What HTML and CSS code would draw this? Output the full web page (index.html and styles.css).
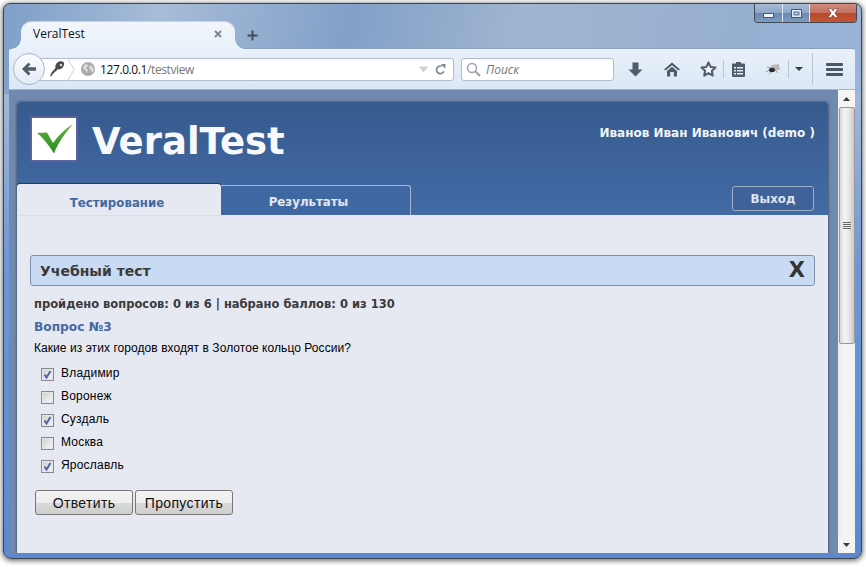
FILE: index.html
```html
<!DOCTYPE html>
<html lang="ru">
<head>
<meta charset="utf-8">
<title>VeralTest</title>
<link rel="stylesheet" href="styles.css">
</head>
<body>
<div class="window">
  <div class="caption">
    <div class="cap-btn cap-min"><span class="min-glyph"></span></div>
    <div class="cap-btn cap-max"><span class="max-glyph"></span></div>
    <div class="cap-btn cap-close">
      <svg width="16" height="10" viewBox="0 0 16 10"><path d="M3 0.500h3l2 2.400 2-2.400h3L9.800 5 13 9.500h-3L8 7 6 9.500H3L6.200 5z" fill="#fff" stroke="#5a2a20" stroke-width=".5"/></svg>
    </div>
  </div>
  <div class="tabstrip">
    <div class="ff-tab">
      <span class="ff-tab-title">VeralTest</span>
      <svg class="ff-tab-close" width="8" height="8" viewBox="0 0 8 8"><path d="M1 1l6 6M7 1L1 7" stroke="#7f8a96" stroke-width="2"/></svg>
    </div>
    <svg class="newtab" width="11" height="11" viewBox="0 0 11 11"><path d="M5.500 0.500v10M0.500 5.500h10" stroke="#3f4d5e" stroke-width="2"/></svg>
  </div>
  <div class="toolbar">
    <div class="backbtn">
      <svg width="16" height="14" viewBox="0 0 16 14"><path d="M7.500 0.500L1 7l6.500 6.500 2-2L6.800 8.800H15V5.200H6.800L9.500 2.500z" fill="#4f5c6c"/></svg>
    </div>
    <div class="urlbar">
      <div class="identity">
        <svg width="17" height="18" viewBox="0 0 17 18"><path d="M1 16.500l1.500-4 4-4.500c-.5-2 .2-4 1.800-5.500 2-1.500 5-1.800 6.200-.5 1.200 1.400.7 4-1 5.800-1.500 1.500-3.500 2-5.200 1.500L7 11.500l-1.500.3-.3 1.500-1.500.4-.5 1.800z" fill="#4a4a4a"/><circle cx="12" cy="5" r="1.300" fill="#cfd5dc"/></svg>
        <svg class="chevron" width="8" height="23" viewBox="0 0 8 23"><path d="M0.500 0L7 11.500 0.500 23" fill="none" stroke="#c9d1da"/></svg>
      </div>
      <svg class="globe" width="14" height="14" viewBox="0 0 14 14"><circle cx="7" cy="7" r="7" fill="#a9abad"/><path d="M3 3l3-1 1 2-2 2 2 2-1 3-2-3-2-1zM9 3l3 2 1 3-2 3-1-3-2-2z" fill="#d9dbdd"/></svg>
      <span class="url"><span class="url-host">127.0.0.1</span><span class="url-path">/testview</span></span>
      <svg class="url-drop" width="11" height="7" viewBox="0 0 11 7"><path d="M0.500 0.500h10L5.500 6.500z" fill="#cdd3da"/></svg>
      <svg class="reload" width="11" height="13" viewBox="0 0 13 13"><path d="M10.500 8.500A4.500 4.500 0 1 1 8 2.700" fill="none" stroke="#7d8793" stroke-width="2"/><path d="M7 0l5.500 0-.5 5.500z" fill="#7d8793"/></svg>
    </div>
    <div class="searchbar">
      <svg width="15" height="15" viewBox="0 0 15 15"><circle cx="6" cy="6" r="4.500" fill="#fff" stroke="#9aa3ad" stroke-width="1.500"/><path d="M9.500 9.500l4.500 4.500" stroke="#9aa3ad" stroke-width="2"/></svg>
      <span class="search-text">Поиск</span>
    </div>
    <div class="tools">
      <svg class="t-down" width="15" height="15" viewBox="0 0 15 15"><path d="M4.500 0.500h6v7h4L7.500 14.500 0.500 7.500h4z" fill="#4f5c6c"/></svg>
      <svg class="t-home" width="16" height="15" viewBox="0 0 16 15"><path d="M8 0.500L0 7.500 1.500 8.500 8 3.200l6.500 5.300L16 7.500zM3 9l5-4.200L13 9v5.500H9.800V10H6.200v4.500H3z" fill="#4f5c6c"/></svg>
      <svg class="t-star" width="17" height="16" viewBox="0 0 17 16"><path d="M8.500 1.500l2.100 4.400 4.900.6-3.600 3.300.9 4.800-4.300-2.400-4.300 2.400.9-4.800L1.500 6.500l4.900-.6z" fill="#f2f6fb" stroke="#4f5c6c" stroke-width="2" stroke-linejoin="round"/></svg>
      <span class="t-sep"></span>
      <svg class="t-clip" width="15" height="16" viewBox="0 0 15 16"><path d="M5 2.500V1h5v1.500h3a1 1 0 0 1 1 1V15a1 1 0 0 1-1 1H2a1 1 0 0 1-1-1V3.500a1 1 0 0 1 1-1z" fill="#4f5c6c"/><path d="M3 6h2v1.500H3zM6 6h6v1.500H6zM3 9h2v1.500H3zM6 9h6v1.500H6zM3 12h2v1.500H3zM6 12h6v1.500H6z" fill="#e4ecf5"/></svg>
      <svg class="t-bug" width="16" height="12" viewBox="0 0 16 12"><path d="M1 9l5-3M2 4l4 1M4 11l3-4M14 1l-3 2M15 6h-3M13 10l-3-3" stroke="#9a9a9a"/><ellipse cx="10" cy="4.500" rx="4.500" ry="3" fill="#b8b8b8"/><ellipse cx="7" cy="7" rx="3" ry="2.200" fill="#2e2e2e"/></svg>
      <span class="t-sep t-sep2"></span>
      <svg class="t-caret" width="8" height="4" viewBox="0 0 8 4"><path d="M0 0h8L4 4z" fill="#333f4d"/></svg>
      <span class="t-sep t-sep3"></span>
      <div class="t-menu"><span></span><span></span><span></span></div>
    </div>
  </div>
  <div class="viewport">
    <div class="page">
      <div class="card">
        <header class="head">
          <div class="head-top">
            <div class="logo">
              <svg width="36" height="30" viewBox="0 0 36 30"><defs><linearGradient id="chk" x1="0" y1="0" x2="0" y2="1"><stop offset="0" stop-color="#5cb53c"/><stop offset="1" stop-color="#2f8a22"/></linearGradient></defs><path d="M0 9l10-.5 6 10.500C21 12 28 5 36 0 28 9 21 19 17 29.500 12 21 6 14 0 9z" fill="url(#chk)"/></svg>
            </div>
            <div class="brand">VeralTest</div>
            <div class="user">Иванов Иван Иванович (demo )</div>
          </div>
          <nav class="tabs">
            <a class="tab tab-active">Тестирование</a>
            <a class="tab tab-idle">Результаты</a>
            <a class="logout">Выход</a>
          </nav>
        </header>
        <main class="content">
          <div class="test-bar"><span class="test-title">Учебный тест</span><span class="test-x">X</span></div>
          <div class="progress">пройдено вопросов: 0 из 6 | набрано баллов: 0 из 130</div>
          <h2 class="q-num">Вопрос №3</h2>
          <p class="q-text">Какие из этих городов входят в Золотое кольцо России?</p>
          <ul class="answers">
            <li class="answer"><span class="cb cb-on"><svg width="9" height="9" viewBox="0 0 9 9"><path d="M1.500 4.500l2 3L7.500 1" fill="none" stroke="#4d66ab" stroke-width="2"/></svg></span>Владимир</li>
            <li class="answer"><span class="cb"></span>Воронеж</li>
            <li class="answer"><span class="cb cb-on"><svg width="9" height="9" viewBox="0 0 9 9"><path d="M1.500 4.500l2 3L7.500 1" fill="none" stroke="#4d66ab" stroke-width="2"/></svg></span>Суздаль</li>
            <li class="answer"><span class="cb"></span>Москва</li>
            <li class="answer"><span class="cb cb-on"><svg width="9" height="9" viewBox="0 0 9 9"><path d="M1.500 4.500l2 3L7.500 1" fill="none" stroke="#4d66ab" stroke-width="2"/></svg></span>Ярославль</li>
          </ul>
          <div class="actions">
            <button class="btn btn-answer">Ответить</button>
            <button class="btn btn-skip">Пропустить</button>
          </div>
        </main>
      </div>
    </div>
    <div class="scrollbar">
      <div class="sb-arrow"><svg width="7" height="4" viewBox="0 0 7 4"><path d="M3.500 0L7 4H0z" fill="#3a3a3a"/></svg></div>
      <div class="sb-thumb"><span class="grip"></span></div>
      <div class="sb-track"></div>
      <div class="sb-arrow"><svg width="7" height="4" viewBox="0 0 7 4"><path d="M0 0h7L3.500 4z" fill="#3a3a3a"/></svg></div>
    </div>
  </div>
</div>
</body>
</html>
```

FILE: styles.css
```css
* { box-sizing: border-box; }
html, body { margin: 0; padding: 0; height: 100%; overflow: hidden; background: #fff; }
body { width: 866px; height: 567px; padding: 3px 4px 8px 3px; }

.window {
  position: relative;
  width: 859px;
  height: 556px;
  padding: 0 6px 5px 5px;
  display: flex;
  flex-direction: column;
  border: 1px solid #3c4650;
  border-radius: 7px 7px 8px 8px;
  background:
    linear-gradient(100deg, #7f9fc8 0%, #a7bcd8 18%, #82a0c8 40%, #a0b5d0 60%, #96aed0 85%, #9ab4da 100%) top / 100% 90px no-repeat,
    linear-gradient(#a4b9d8 90px, #6d97d8 260px, #5b88d0 100%);
  box-shadow: 0 1px 5px 1px rgba(0,0,0,.55);
}

.caption { position: absolute; top: 0; right: 4px; display: flex; height: 19px; border: 1px solid #3f4a56; border-top: 0; border-radius: 0 0 4px 4px; overflow: hidden; }
.cap-btn { display: flex; align-items: center; justify-content: center; height: 100%; }
.cap-min { width: 28px; background: linear-gradient(#a8bcd6, #8ca6c8 50%, #6a88b0 52%, #7f9bc0); border-right: 1px solid #dfe8f2; }
.cap-max { width: 27px; background: linear-gradient(#a8bcd6, #8ca6c8 50%, #6a88b0 52%, #7f9bc0); border-right: 1px solid #dfe8f2; }
.cap-close { width: 46px; background: linear-gradient(#d08c7c, #c47060 48%, #b94a2c 52%, #c25636); }
.min-glyph { display: block; width: 11px; height: 5px; margin-top: 5px; background: #f2f5f8; border: 1px solid #4a5a70; }
.max-glyph { display: block; width: 11px; height: 9px; background: #dfe6ee; border: 1px solid #4a5a70; box-shadow: inset 0 0 0 1.500px #dfe6ee, inset 0 0 0 3px #6d85a6; }

.tabstrip { height: 45px; padding: 17px 0 0 12px; display: flex; align-items: flex-start; }
.ff-tab {
  position: relative; z-index: 1;
  width: 214px; height: 28px; padding: 0 13px 4px 12px;
  display: flex; align-items: center; justify-content: space-between;
  background: linear-gradient(#f2f6fb, #e8f0f9);
  border-radius: 11px 11px 0 0;
  border-top: 1px solid #c5d3e4;
  font: 12px "Open Sans", "Noto Sans", sans-serif; color: #111;
}
.ff-tab::before, .ff-tab::after { content: ""; position: absolute; bottom: 0; width: 10px; height: 10px; }
.ff-tab::before { left: -10px; background: radial-gradient(circle at 0 0, transparent 9.500px, #e8f0f9 10px); }
.ff-tab::after { right: -10px; background: radial-gradient(circle at 100% 0, transparent 9.500px, #e8f0f9 10px); }
.newtab { margin: 9px 0 0 12px; }

.toolbar {
  height: 42px;
  display: flex; align-items: center;
  background: linear-gradient(#e9f1fa, #dae7f5);
  border-top: 1px solid #8ba1bd;
  border-bottom: 1px solid #a3b5cb;
  border-radius: 3px 3px 0 0;
  margin-top: -1px;
}
.backbtn {
  position: relative; z-index: 1;
  width: 32px; height: 32px; margin-left: 4px; border-radius: 50%;
  display: flex; align-items: center; justify-content: center;
  background: linear-gradient(#f9fbfd, #e6edf5);
  border: 1px solid #a7b7ca;
}
.urlbar {
  width: 420px; height: 23px; margin-left: -11px; padding: 0 7px 0 0;
  display: flex; align-items: center;
  background: #fff; border: 1px solid #aebccd; border-left: 0; border-radius: 0 3px 3px 0;
}
.identity { display: flex; align-items: center; height: 100%; padding-left: 15px; }
.chevron { margin-left: 1px; }
.globe { margin-left: 6px; }
.url { margin-left: 5px; flex: 1; font: 12px "Open Sans", "Noto Sans", sans-serif; letter-spacing: -.4px; }
.url-host { color: #111; }
.url-path { color: #777; }
.reload { margin-left: 6px; }
.searchbar {
  width: 153px; height: 23px; margin-left: 7px; padding-left: 4px;
  display: flex; align-items: center; gap: 5px;
  background: #fff; border: 1px solid #aebccd; border-radius: 3px;
  font: italic 12px "Open Sans", "Noto Sans", sans-serif; color: #777;
}
.tools { flex: 1; display: flex; align-items: center; padding-left: 14px; height: 100%; }
.t-home { margin-left: 21px; }
.t-star { margin-left: 20px; }
.t-sep { width: 1px; height: 18px; margin-left: 6px; background: #b8c6d6; }
.t-clip { margin-left: 7px; }
.t-bug { margin-left: 19px; }
.t-sep2 { margin-left: 7px; }
.t-caret { margin-left: 6px; }
.t-sep3 { height: 32px; margin-left: 9px; }
.t-menu { margin-left: 13px; width: 17px; display: flex; flex-direction: column; gap: 2px; }
.t-menu span { display: block; height: 3px; background: #4a5766; border-radius: 1px; }

.viewport { flex: 1; min-height: 0; display: flex; background: #7189ae; }
.page { width: 829px; padding: 12px 0 0 8px; overflow: hidden; }
.card {
  width: 811px; height: 470px;
  background: #e6e9f2;
  border-radius: 3px 3px 0 0;
  box-shadow: 0 0 3px rgba(30,40,60,.8);
  font: 12px "Liberation Sans", sans-serif; color: #000;
}
.head { height: 113px; display: flex; flex-direction: column; border-radius: 3px 3px 0 0; background: linear-gradient(#375a8e, #426ba5); }
.head-top { height: 82px; display: flex; align-items: flex-start; padding: 14px 13px 0 13px; }
.logo { width: 48px; height: 46px; padding-left: 2px; display: flex; align-items: center; justify-content: center; background: #fff; border: 2px solid #5f62a0; border-radius: 2px; }
.brand { margin: 3px 0 0 14px; font: bold 37px/46px "DejaVu Sans", sans-serif; color: #f7f9fc; }
.user { margin-left: auto; padding-top: 9px; font: bold 12px/16px "DejaVu Sans", sans-serif; color: #f2f5fa; }
.tabs { flex: 1; display: flex; align-items: flex-end; font: bold 11.800px "DejaVu Sans", sans-serif; padding-right: 14px; }
.tab { display: flex; align-items: center; justify-content: center; }
.tab-active { width: 204px; height: 31px; padding: 7px 4px 0 0; background: #e6e9f2; color: #4468a4; border-radius: 3px 3px 0 0; box-shadow: 0 -1px 1px rgba(30,30,30,.6), 1px 0 1px rgba(30,30,30,.5); }
.tab-idle { width: 190px; height: 30px; padding: 2px 14px 0 0; background: #3f67a1; color: #e3e8f1; border: 1px solid #a5b7d0; border-width: 1px 1px 0 1px; border-left: 0; border-radius: 0 3px 0 0; }
.logout { margin: 0 0 4px auto; width: 82px; height: 25px; display: flex; align-items: center; justify-content: center; border: 1px solid #9db0cc; border-radius: 3px; background: #3e6299; color: #dfe5ef; }

.content { padding: 40px 13px 0 13px; }
.test-bar { height: 31px; padding: 0 9px; display: flex; align-items: center; justify-content: space-between; background: #c9daf3; border: 1px solid #7d91b3; border-radius: 3px; }
.test-title { font: bold 14px "DejaVu Sans", sans-serif; color: #3a3a3a; }
.test-x { font: bold 21px/1 "DejaVu Sans", sans-serif; color: #333; }
.progress { margin: 10px 0 0 4px; font: bold 11.500px/16px "DejaVu Sans", sans-serif; color: #3a3a3a; }
.q-num { margin: 7px 0 0 4px; font: bold 12.200px/16px "DejaVu Sans", sans-serif; color: #4468a4; }
.q-text { margin: 5px 0 0 4px; font: 12px/16px "Liberation Sans", sans-serif; letter-spacing: .06px; }
.answers { list-style: none; margin: 5px 0 0 11px; padding: 0; }
.answer { height: 23px; display: flex; align-items: center; line-height: 14px; letter-spacing: .2px; }
.cb { width: 13px; height: 13px; margin: 3px 7px 0 0; display: flex; align-items: center; justify-content: center; background: linear-gradient(135deg, #cfcfcf, #f8f8f8); border: 1px solid #8a8a8a; box-shadow: inset 0 0 0 1px #e6e6e6; }
.actions { margin-top: 14px; margin-left: 5px; display: flex; gap: 2px; }
.btn { height: 25px; padding: 0; font: 14px "Liberation Sans", sans-serif; letter-spacing: .35px; color: #111; background: linear-gradient(#f4f4f4, #ececec 50%, #d9d9d9 52%, #cfcfcf); border: 1px solid #777; border-radius: 3px; }
.btn-answer { width: 98px; }
.btn-skip { width: 98px; }

.scrollbar { width: 17px; display: flex; flex-direction: column; background: linear-gradient(90deg, #e8e8e8, #f6f6f6 30%, #f0f0f0); }
.sb-arrow { height: 17px; display: flex; align-items: center; justify-content: center; background: #f4f4f4; flex: none; }
.sb-thumb { height: 237px; margin: 0 0 0 1px; display: flex; align-items: center; justify-content: center; background: linear-gradient(90deg, #d8d8d8, #f6f6f6 35%, #e2e2e2 70%, #c8c8c8); border: 1px solid #9a9a9a; border-radius: 2px; }
.grip { display: block; width: 8px; height: 7px; background: repeating-linear-gradient(#666 0 1px, #eee 1px 2px); }
.sb-track { flex: 1; }
```
